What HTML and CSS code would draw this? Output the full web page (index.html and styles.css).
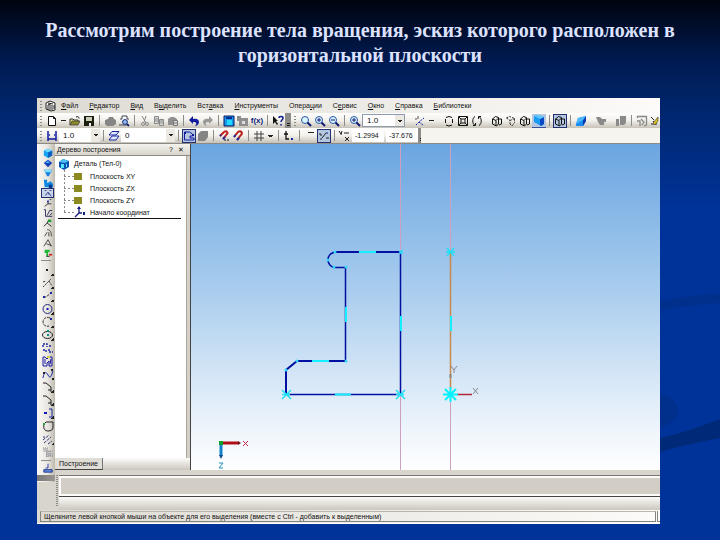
FILE: index.html
```html
<!DOCTYPE html>
<html lang="ru">
<head>
    <meta charset="utf-8">
    <title>Построение тела вращения</title>
    <link rel="stylesheet" href="styles.css">
</head>
<body>
    <!-- icon set, 12x12 grid -->
    <svg class="sprite" aria-hidden="true">
        <symbol id="i-app" viewBox="0 0 12 12"><path d="M1 3l4-2 5 2v7l-4 1-5-2z" fill="#fff" stroke="#222"/><path d="M3 10V5l2-1v6M7 10V5M9 9V5M3 3l5 1" fill="none" stroke="#222"/></symbol>
        <symbol id="i-new" viewBox="0 0 12 12"><path d="M2.5 1.5h5l2 2v7h-7z" fill="#fff" stroke="#111"/><path d="M7.5 1.5v2h2" fill="none" stroke="#111"/></symbol>
        <symbol id="i-open" viewBox="0 0 12 12"><path d="M1 10V4h3l1 1h4v2" fill="#e8e48a" stroke="#333"/><path d="M1 10l2-4h8l-2 4z" fill="#8c8a28" stroke="#333" stroke-width=".7"/><path d="M7 2c2-1 3 0 3 1.500" fill="none" stroke="#111"/></symbol>
        <symbol id="i-save" viewBox="0 0 12 12"><path d="M1 1h10v10H1z" fill="#1c2010"/><path d="M3 2h6v4H3z" fill="#c8ccb8"/><path d="M4 8h4v3H4z" fill="#eee"/><path d="M4 8h2v3H4z" fill="#222"/></symbol>
        <symbol id="i-print" viewBox="0 0 12 12"><path d="M1 5l3-1 1-2h4l1 2 2 1v4l-3 2H3L1 9z" fill="#858585"/></symbol>
        <symbol id="i-preview" viewBox="0 0 12 12"><path d="M2 4h2V1h5v3h2" fill="#fff" stroke="#445"/><path d="M1 9h10v2H1z" fill="#8d8d8d"/><circle cx="7" cy="7" r="2.400" fill="#9be" stroke="#0a2a80"/><path d="M9 9l2 2" stroke="#001060" stroke-width="1.500"/></symbol>
        <symbol id="i-cut" viewBox="0 0 12 12"><path d="M3 1l4 7M7 1L5 7" stroke="#888" fill="none"/><circle cx="4" cy="9" r="1.500" fill="none" stroke="#888"/><circle cx="8" cy="9" r="1.500" fill="none" stroke="#888"/></symbol>
        <symbol id="i-copy" viewBox="0 0 12 12"><path d="M1.500 1.500h4v7h-4zM6.500 4.500h4v6h-4zM2 4h3M2 6h3M7 6h3M7 8h3" fill="#ddd" stroke="#888"/></symbol>
        <symbol id="i-paste" viewBox="0 0 12 12"><path d="M1 10V4l3-2h3l3 2v6z" fill="#909090"/><path d="M6.500 5.500h4v5h-4zM7 8h3" fill="#ddd" stroke="#777"/></symbol>
        <symbol id="i-undo" viewBox="0 0 12 12"><path d="M1 5l4-4v3c4-1 6 1 6 3s-2 4-4 4c2-2 2-4-2-4v2z" fill="#101c9c"/></symbol>
        <symbol id="i-redo" viewBox="0 0 12 12"><path d="M11 5L7 1v3C3 3 1 5 1 7s2 4 4 4C3 9 3 7 7 7v2z" fill="#999"/></symbol>
        <symbol id="i-manager" viewBox="0 0 12 12"><path d="M1 1h10v10H1z" fill="#1598f0" stroke="#0a1860"/><path d="M3 2h6v2H3z" fill="#062c90"/><path d="M4 5h5v5H4z" fill="#22d8ff"/></symbol>
        <symbol id="i-vars" viewBox="0 0 12 12"><path d="M0 1h4v2h7v8H2V6H0z" fill="#8f8f8f"/><path d="M5 6h3v3H5z" fill="#ddd"/></symbol>
        <symbol id="i-help" viewBox="0 0 12 12"><path d="M1 1v8l2-2 2 3 1-1-2-3h2z" fill="#111"/><path d="M7 3c0-2 4-2 4 0s-2 2-2 4M9 9v1.500" fill="none" stroke="#0c1c8c" stroke-width="1.500"/></symbol>
        <symbol id="i-zoom" viewBox="0 0 12 12"><circle cx="5" cy="5" r="3.500" fill="#d8f4ff" stroke="#2c58a8"/><path d="M7.500 7.500L11 11" stroke="#101870" stroke-width="2"/></symbol>
        <symbol id="i-zoomin" viewBox="0 0 12 12"><circle cx="5" cy="5" r="3.500" fill="#d8f4ff" stroke="#2c58a8"/><path d="M3 5h4M5 3v4" stroke="#101870"/><path d="M7.500 7.500L11 11" stroke="#101870" stroke-width="2"/></symbol>
        <symbol id="i-zoomout" viewBox="0 0 12 12"><circle cx="5" cy="5" r="3.500" fill="#d8f4ff" stroke="#2c58a8"/><path d="M3 5h4" stroke="#101870"/><path d="M7.500 7.500L11 11" stroke="#101870" stroke-width="2"/></symbol>
        <symbol id="i-axes" viewBox="0 0 12 12"><path d="M2 10l3-3 5-4M5 7l4 3" fill="none" stroke="#1828a0" stroke-dasharray="2 1"/><path d="M4 1v3M1 4h2" stroke="#555"/></symbol>
        <symbol id="i-pan" viewBox="0 0 12 12"><path d="M3 2.500l3-1 3 1M9.500 4v4M2.500 4v4M3 10l3 1 3-1" fill="none" stroke="#111"/></symbol>
        <symbol id="i-frame" viewBox="0 0 12 12"><path d="M1.500 1.500h9v9h-9zM4 4h4v4H4zM2 2l2 2M10 2L8 4M2 10l2-2M10 10L8 8" fill="none" stroke="#111"/></symbol>
        <symbol id="i-rotate" viewBox="0 0 12 12"><path d="M4 1.500C1 3 1 9 4 10.500M8 1.500c3 1.500 3 7.500 0 9M2 10.500h2.500V8M10 1.500H7.500V4" fill="none" stroke="#111"/></symbol>
        <symbol id="i-wire" viewBox="0 0 12 12"><path d="M1.500 4l3-2.500 3 1V9l-2 2-4-2zM1.500 4L5 5.500 7.500 3M5 5.500V11M7 4h3.500v5L8 10" fill="none" stroke="#111"/></symbol>
        <symbol id="i-thin" viewBox="0 0 12 12"><path d="M1.500 3l3-1.500 5 2v4L7 11 5 9M1.500 3L5 5.500V9M5 5.500l4.500-2" fill="none" stroke="#333" stroke-dasharray="2 1"/></symbol>
        <symbol id="i-solid" viewBox="0 0 12 12"><path d="M1 2l4-1 6 2v7l-3 2-7-4z" fill="#189cf8"/><path d="M7 5l4-2v7l-3 2-1-1z" fill="#0848c0"/><path d="M1 2l4-1 6 2-4 2z" fill="#60c8ff"/></symbol>
        <symbol id="i-persp" viewBox="0 0 12 12"><path d="M1 9l2-6 8-2v5l-3 5H1z" fill="#188cf0"/><path d="M8 5l3-4v5l-3 5z" fill="#0838b0"/><path d="M1 9l2-6 8-2-3 4z" fill="#50b8ff"/></symbol>
        <symbol id="i-grayA" viewBox="0 0 12 12"><path d="M1 2h4l2 2h4v3H9v3H5L3 7z" fill="#8a8a8a"/></symbol>
        <symbol id="i-grayB" viewBox="0 0 12 12"><path d="M1 4h3v7H1zM5 1h6v7L9 10H5z" fill="#8a8a8a"/></symbol>
        <symbol id="i-grayC" viewBox="0 0 12 12"><path d="M1.500 3V1.500h9V10L8 11M1 6h3v5M5 4l3 3-2 3" fill="none" stroke="#888" stroke-width="1.300"/></symbol>
        <symbol id="i-edit" viewBox="0 0 12 12"><path d="M1 2l3 3M1 9h6M3 6l3 3" stroke="#222"/><path d="M3 8l5-6v4l-3 4z" fill="#d8c020" stroke="#333" stroke-width=".6"/></symbol>
        <symbol id="i-step" viewBox="0 0 12 12"><path d="M2 1v10M10 1v10M2 9h8M3 5h1M8 5h1" stroke="#1018a0" stroke-width="1.500"/></symbol>
        <symbol id="i-layers" viewBox="0 0 12 12"><path d="M4 1.500h7L8 5H1zM4 6h7L8 10H1z" fill="#dfe8ff" stroke="#1828a0"/></symbol>
        <symbol id="i-sketch" viewBox="0 0 12 12"><path d="M1.500 10V2h5l3 2v2H7v2h4v2z" fill="none" stroke="#1018a0"/><path d="M1 2h2v2H1zM9 4h2v2H9z" fill="#1018a0"/></symbol>
        <symbol id="i-body" viewBox="0 0 12 12"><path d="M1 4l3-3h7v6l-3 4H1z" fill="#858585"/></symbol>
        <symbol id="i-magnet" viewBox="0 0 12 12"><path d="M2 7l4-5c3-2 5 1 3 3l-4 5" fill="none" stroke="#b82020" stroke-width="2"/><path d="M2 7l1.500-2M5 10l2-2" stroke="#1828a0" stroke-width="2"/></symbol>
        <symbol id="i-magnet2" viewBox="0 0 12 12"><path d="M2 6l4-4c3-2 4 1 3 2L5 9" fill="none" stroke="#c02020" stroke-width="2"/><path d="M6 10h6" stroke="#111" stroke-dasharray="2 1"/><path d="M2 6l1-1M5 9l2-2" stroke="#1828a0" stroke-width="2"/></symbol>
        <symbol id="i-grid" viewBox="0 0 12 12"><path d="M4 1v10M8 1v10M1 4h10M1 8h10" stroke="#444"/></symbol>
        <symbol id="i-local" viewBox="0 0 12 12"><path d="M3 1v8h3M1 4h4" fill="none" stroke="#111" stroke-width="1.300"/><path d="M8 8h2v2H8z" fill="#1828a0"/></symbol>
        <symbol id="i-ortho" viewBox="0 0 12 12"><path d="M4 2.500h6" stroke="#222"/></symbol>
        <symbol id="i-round" viewBox="0 0 12 12"><path d="M1 4h2v2M4 8l4-5M8 8h3M2 9h2" fill="none" stroke="#222"/><path d="M8 3h2" stroke="#1828a0"/></symbol>
        <symbol id="i-coord" viewBox="0 0 12 12"><path d="M1 1l2 3M4 1L3 5M6 3h5M7 7l4 4M11 7l-4 4" fill="none" stroke="#222"/></symbol>

        <symbol id="p-root" viewBox="0 0 12 12"><path d="M1 4l4-3 6 2v6l-5 3-5-3z" fill="#0c50b4"/><path d="M1 4l4-3 6 2-4 2z" fill="#4cc0f4"/><path d="M3 6h3v4H3zM8 6h1v3H8z" fill="#50e8ff"/></symbol>
        <symbol id="p-cube" viewBox="0 0 12 12"><path d="M1 3l5-2 5 2v6l-5 3-5-3z" fill="#18a4f4"/><path d="M6 5l5-2v6l-5 3z" fill="#0c60c0"/><path d="M1 3l5-2 5 2-5 2z" fill="#74dcff"/></symbol>
        <symbol id="p-node" viewBox="0 0 12 12"><path d="M1 6l5-4 5 4-5 5z" fill="#1440b8"/><path d="M3 6l3-3 2 3z" fill="#38b0ff"/></symbol>
        <symbol id="p-cone" viewBox="0 0 12 12"><path d="M1 2h10L7 10H5z" fill="#1880e0"/><path d="M1 2h10L9 5H3z" fill="#80e0ff"/></symbol>
        <symbol id="p-part" viewBox="0 0 12 12"><path d="M1 2h4v4l4-2 3 3v4H2z" fill="#1088e0"/><path d="M7 8h4v4H7z" fill="#0a3890"/></symbol>
        <symbol id="p-sketch" viewBox="0 0 12 12"><path d="M2 3h2M3 9l3-4 4 5M8 3h2M6 7h2" fill="none" stroke="#222c80"/></symbol>
        <symbol id="p-point" viewBox="0 0 12 12"><path d="M2 10l4-3V4M6 7h4M8 2h2" fill="none" stroke="#222"/><path d="M5 3h2v2H5z" fill="#1828a0"/></symbol>
        <symbol id="p-dim" viewBox="0 0 12 12"><path d="M1 2h2v8h8M5 9l3-6h3M8 9l3-3" fill="none" stroke="#1a1a50"/></symbol>
        <symbol id="p-check" viewBox="0 0 12 12"><path d="M1 10l4-4 2-4M5 6l5 4" fill="none" stroke="#111"/><path d="M6 2h4v3H6z" fill="#20a030"/></symbol>
        <symbol id="p-curve" viewBox="0 0 12 12"><path d="M2 10l3-5M5 2c4 0 5 3 5 8M7 5v5" fill="none" stroke="#333"/></symbol>
        <symbol id="p-measure" viewBox="0 0 12 12"><path d="M1 10l5-8 4 8M4 7l6 2" fill="none" stroke="#333"/></symbol>
        <symbol id="p-filter" viewBox="0 0 12 12"><path d="M2 2h6v3H6v5H4V6H2z" fill="#20b838"/><path d="M7 8h4" stroke="#d02020" stroke-width="2"/><path d="M4 10h4" stroke="#111"/></symbol>
        <symbol id="g-point" viewBox="0 0 12 12"><path d="M4 5h2v2H4z" fill="#222"/></symbol>
        <symbol id="g-aux" viewBox="0 0 12 12"><path d="M1 10l8-8M1 5l3-1M7 4l3 5" fill="none" stroke="#333" stroke-dasharray="2 1"/></symbol>
        <symbol id="g-line" viewBox="0 0 12 12"><path d="M1 7h3l5-4" fill="none" stroke="#333" stroke-dasharray="3 1"/><path d="M1 6h2v2H1zM8 2h2v2H8z" fill="#1828a0"/></symbol>
        <symbol id="g-circle" viewBox="0 0 12 12"><circle cx="5.500" cy="6" r="4.500" fill="none" stroke="#222c80"/><path d="M4.500 5h2v2h-2z" fill="#1018c0"/></symbol>
        <symbol id="g-arc" viewBox="0 0 12 12"><path d="M8 2C4 0 1 3 1 6s3 5 6 4" fill="none" stroke="#333" stroke-dasharray="3 1"/><path d="M8 2h2v2H8z" fill="#1828a0"/></symbol>
        <symbol id="g-ellipse" viewBox="0 0 12 12"><ellipse cx="5.500" cy="6" rx="5" ry="3.500" fill="none" stroke="#222"/><path d="M5 5h2v2H5zM5 1h2v2H5z" fill="#108888"/></symbol>
        <symbol id="g-multi" viewBox="0 0 12 12"><path d="M1 5V2h4v3M7 4h3M1 8h3v3M7 7v3h4" fill="none" stroke="#1828a0" stroke-width="1.400" stroke-dasharray="2 1"/></symbol>
        <symbol id="g-rect" viewBox="0 0 12 12"><path d="M1 2h2l2 2 2-2h3v9H7V6L5 8v3H1zM3 4v5M9 4l-1 5" fill="none" stroke="#1818a0"/><path d="M5 1h3v2H5z" fill="#d0d040"/></symbol>
        <symbol id="g-spline" viewBox="0 0 12 12"><path d="M1 10c1-6 3-7 5-3s3 2 5-4" fill="none" stroke="#1828a0"/><path d="M9 1h2v2H9zM1 4h2v2H1z" fill="#222"/></symbol>
        <symbol id="g-chamfer" viewBox="0 0 12 12"><path d="M1 2h3l5 4v5M6 9h3" fill="none" stroke="#222"/></symbol>
        <symbol id="g-project" viewBox="0 0 12 12"><path d="M7 2h3v8H7" fill="none" stroke="#1828a0"/><path d="M2 5h3v2H2z" fill="#1018c0"/></symbol>
        <symbol id="g-contour" viewBox="0 0 12 12"><path d="M2 4l2-2h7v5c0 3-2 4-5 4s-5-2-4-7z" fill="none" stroke="#222"/><path d="M1 3h2v2H1z" fill="#20a030"/></symbol>
        <symbol id="g-equid" viewBox="0 0 12 12"><path d="M1 7l6-5M2 10l7-6M6 11l4-3M1 4h2" fill="none" stroke="#333c80" stroke-dasharray="3 1"/></symbol>
        <symbol id="g-hatch" viewBox="0 0 12 12"><path d="M1 2h5v3h5v6H4V6H1z" fill="#c6c6c6"/><path d="M1 2h5M4 5h7M4 8h7M4 10h7M5 4v7M8 5v6" stroke="#8c8c8c" stroke-dasharray="1 1"/></symbol>
        <symbol id="g-table" viewBox="0 0 12 12"><path d="M1 8h10v3H1z" fill="#6090e0" stroke="#102080"/><path d="M6 1v5H3" fill="none" stroke="#1828a0"/></symbol>
    </svg>

    <svg class="swoosh" viewBox="0 0 60 160" aria-hidden="true">
        <path d="M0 10C20 4 40 3 60 2v9C40 12 20 15 0 18z" fill="#002f8c"/>
        <path d="M0 102c12 2 18 10 18 17s-8 13-18 17z" fill="#002f8c"/>
        <path d="M0 146c20-4 42-12 60-19v19c-20 4-40 8-60 14z" fill="#002a78"/>
    </svg>

    <h1 class="slide-title">Рассмотрим построение тела вращения, эскиз которого расположен в горизонтальной плоскости</h1>

    <main class="app">
        <nav class="menu">
            <span class="grip"></span>
            <svg class="icon menu-logo"><use href="#i-app"/></svg>
            <button><u>Ф</u>айл</button>
            <button><u>Р</u>едактор</button>
            <button><u>В</u>ид</button>
            <button>В<u>ы</u>делить</button>
            <button>Вст<u>а</u>вка</button>
            <button><u>И</u>нструменты</button>
            <button>Опера<u>ц</u>ии</button>
            <button>С<u>е</u>рвис</button>
            <button><u>О</u>кно</button>
            <button><u>С</u>правка</button>
            <button><u>Б</u>иблиотеки</button>
        </nav>

        <div class="toolbar">
            <span class="grip"></span>
            <button class="tool" aria-label="Создать"><svg class="icon"><use href="#i-new"/></svg></button>
            <button class="drop" aria-label="Вид документа"></button>
            <button class="tool" aria-label="Открыть"><svg class="icon"><use href="#i-open"/></svg></button>
            <button class="tool" aria-label="Сохранить"><svg class="icon"><use href="#i-save"/></svg></button>
            <span class="sep"></span>
            <button class="tool" aria-label="Печать"><svg class="icon"><use href="#i-print"/></svg></button>
            <button class="tool" aria-label="Просмотр"><svg class="icon"><use href="#i-preview"/></svg></button>
            <span class="sep"></span>
            <button class="tool" aria-label="Вырезать"><svg class="icon"><use href="#i-cut"/></svg></button>
            <button class="tool" aria-label="Копировать"><svg class="icon"><use href="#i-copy"/></svg></button>
            <button class="tool" aria-label="Вставить"><svg class="icon"><use href="#i-paste"/></svg></button>
            <span class="sep"></span>
            <button class="tool" aria-label="Отменить"><svg class="icon"><use href="#i-undo"/></svg></button>
            <button class="tool" aria-label="Повторить"><svg class="icon"><use href="#i-redo"/></svg></button>
            <span class="sep"></span>
            <button class="tool" aria-label="Менеджер"><svg class="icon"><use href="#i-manager"/></svg></button>
            <button class="tool" aria-label="Библиотеки"><svg class="icon"><use href="#i-vars"/></svg></button>
            <button class="tool fx">f(x)</button>
            <span class="sep"></span>
            <button class="tool" aria-label="Справка"><svg class="icon"><use href="#i-help"/></svg></button>
            <button class="more" aria-label="Ещё"></button>
            <span class="grip"></span>
            <button class="tool" aria-label="Рамка"><svg class="icon"><use href="#i-zoom"/></svg></button>
            <button class="tool" aria-label="Увеличить"><svg class="icon"><use href="#i-zoomin"/></svg></button>
            <button class="tool" aria-label="Уменьшить"><svg class="icon"><use href="#i-zoomout"/></svg></button>
            <span class="sep"></span>
            <button class="tool" aria-label="Масштаб"><svg class="icon"><use href="#i-zoomin"/></svg></button>
            <span class="combo boxed"><select aria-label="Текущий масштаб"><option>1.0</option></select></span>
            <span class="gap wide"></span>
            <button class="tool" aria-label="Ориентация"><svg class="icon"><use href="#i-axes"/></svg></button>
            <button class="drop" aria-label="Список видов"></button>
            <span class="gap"></span>
            <button class="tool" aria-label="Сдвинуть"><svg class="icon"><use href="#i-pan"/></svg></button>
            <button class="tool" aria-label="Показать все"><svg class="icon"><use href="#i-frame"/></svg></button>
            <button class="tool" aria-label="Повернуть"><svg class="icon"><use href="#i-rotate"/></svg></button>
            <span class="gap"></span>
            <button class="tool" aria-label="Каркас"><svg class="icon"><use href="#i-wire"/></svg></button>
            <button class="tool" aria-label="Без невидимых"><svg class="icon"><use href="#i-thin"/></svg></button>
            <button class="tool" aria-label="Невидимые тонкие"><svg class="icon"><use href="#i-wire"/></svg></button>
            <button class="tool on" aria-label="Полутоновое"><svg class="icon"><use href="#i-solid"/></svg></button>
            <span class="sep"></span>
            <button class="tool on framed" aria-label="С каркасом"><svg class="icon"><use href="#i-wire"/></svg></button>
            <span class="sep"></span>
            <button class="tool" aria-label="Перспектива"><svg class="icon"><use href="#i-persp"/></svg></button>
            <span class="gap"></span>
            <button class="tool" aria-label="Перестроить"><svg class="icon"><use href="#i-grayA"/></svg></button>
            <span class="gap"></span>
            <button class="tool" aria-label="Деталь"><svg class="icon"><use href="#i-grayB"/></svg></button>
            <span class="sep"></span>
            <button class="tool" aria-label="Сечение"><svg class="icon"><use href="#i-grayC"/></svg></button>
            <button class="tool" aria-label="Эскиз"><svg class="icon"><use href="#i-edit"/></svg></button>
        </div>

        <div class="toolbar-row">
            <div class="toolbar short">
                <span class="grip"></span>
                <button class="tool" aria-label="Шаг"><svg class="icon"><use href="#i-step"/></svg></button>
                <span class="combo"><select aria-label="Шаг курсора"><option>1.0</option></select></span>
                <span class="sep"></span>
                <button class="tool" aria-label="Слои"><svg class="icon"><use href="#i-layers"/></svg></button>
                <span class="combo layer"><select aria-label="Слой"><option>0</option></select></span>
                <span class="sep"></span>
                <button class="tool on framed" aria-label="Эскиз"><svg class="icon"><use href="#i-sketch"/></svg></button>
                <button class="tool" aria-label="Тело"><svg class="icon"><use href="#i-body"/></svg></button>
                <span class="sep"></span>
                <button class="tool" aria-label="Привязки"><svg class="icon"><use href="#i-magnet2"/></svg></button>
                <button class="tool" aria-label="Запретить привязки"><svg class="icon"><use href="#i-magnet"/></svg></button>
                <span class="sep"></span>
                <button class="tool" aria-label="Сетка"><svg class="icon"><use href="#i-grid"/></svg></button>
                <button class="drop caret" aria-label="Вид сетки"></button>
                <span class="sep"></span>
                <button class="tool" aria-label="Система координат"><svg class="icon"><use href="#i-local"/></svg></button>
                <span class="sep"></span>
                <button class="tool" aria-label="Ортогонально"><svg class="icon"><use href="#i-ortho"/></svg></button>
                <button class="tool on framed" aria-label="Округление"><svg class="icon"><use href="#i-round"/></svg></button>
                <span class="sep"></span>
                <svg class="icon"><use href="#i-coord"/></svg>
                <input class="coord" aria-label="X" value="-1.2994">
                <input class="coord" aria-label="Y" value="-37.676">
                <button class="more" aria-label="Ещё"></button>
            </div>
        </div>

        <div class="work">
            <div class="palette">
                <div class="palette-group">
                    <button aria-label="Деталь"><svg class="icon"><use href="#p-cube"/></svg></button>
                    <button aria-label="Кривые"><svg class="icon"><use href="#p-node"/></svg></button>
                    <button aria-label="Поверхности"><svg class="icon"><use href="#p-cone"/></svg></button>
                    <button aria-label="Листовое тело"><svg class="icon"><use href="#p-part"/></svg></button>
                    <button class="on" aria-label="Геометрия"><svg class="icon"><use href="#p-sketch"/></svg></button>
                    <button aria-label="Обозначения"><svg class="icon"><use href="#p-point"/></svg></button>
                    <button aria-label="Размеры"><svg class="icon"><use href="#p-dim"/></svg></button>
                    <button aria-label="Редактирование"><svg class="icon"><use href="#p-check"/></svg></button>
                    <button aria-label="Параметризация"><svg class="icon"><use href="#p-curve"/></svg></button>
                    <button aria-label="Измерения"><svg class="icon"><use href="#p-measure"/></svg></button>
                    <button aria-label="Выделение"><svg class="icon"><use href="#p-filter"/></svg></button>
                </div>
                <hr>
                <div class="palette-group tall">
                    <button class="flyout" aria-label="Точка"><svg class="icon"><use href="#g-point"/></svg></button>
                    <button class="flyout" aria-label="Вспомогательная прямая"><svg class="icon"><use href="#g-aux"/></svg></button>
                    <button class="flyout" aria-label="Отрезок"><svg class="icon"><use href="#g-line"/></svg></button>
                    <button class="flyout" aria-label="Окружность"><svg class="icon"><use href="#g-circle"/></svg></button>
                    <button class="flyout" aria-label="Дуга"><svg class="icon"><use href="#g-arc"/></svg></button>
                    <button class="flyout" aria-label="Эллипс"><svg class="icon"><use href="#g-ellipse"/></svg></button>
                    <button aria-label="Непрерывный ввод"><svg class="icon"><use href="#g-multi"/></svg></button>
                    <button aria-label="Прямоугольник"><svg class="icon"><use href="#g-rect"/></svg></button>
                    <button class="flyout" aria-label="Сплайн"><svg class="icon"><use href="#g-spline"/></svg></button>
                    <button class="flyout" aria-label="Фаска"><svg class="icon"><use href="#g-chamfer"/></svg></button>
                    <button class="flyout" aria-label="Скругление"><svg class="icon"><use href="#g-chamfer"/></svg></button>
                    <button class="flyout" aria-label="Проекция"><svg class="icon"><use href="#g-project"/></svg></button>
                    <button aria-label="Контур"><svg class="icon"><use href="#g-contour"/></svg></button>
                    <button class="flyout" aria-label="Эквидистанта"><svg class="icon"><use href="#g-equid"/></svg></button>
                    <button aria-label="Штриховка"><svg class="icon"><use href="#g-hatch"/></svg></button>
                </div>
                <hr>
                <div class="palette-group">
                    <button aria-label="Таблица"><svg class="icon"><use href="#g-table"/></svg></button>
                </div>
                <div class="palette-end"></div>
            </div>

            <div class="stage">
                <div class="docs">
                    <aside class="tree">
                        <div class="tree-head">
                            <span>Дерево построения</span>
                            <span class="tree-close"><button>?</button><button>✕</button></span>
                        </div>
                        <div class="tree-body">
                            <div class="tree-root"><svg class="icon"><use href="#p-root"/></svg>Деталь (Тел-0)</div>
                            <ul class="tree-list">
                                <li><i class="plane"></i>Плоскость XY</li>
                                <li><i class="plane"></i>Плоскость ZX</li>
                                <li><i class="plane"></i>Плоскость ZY</li>
                                <li><svg class="icon origin" viewBox="0 0 12 12"><path d="M5 1v6L1 11M5 7h3" fill="none" stroke="#10187c" stroke-width="1.300"/><path d="M3 3l2-3 2 3zM9 6h2v3H9z" fill="#10187c"/></svg>Начало координат</li>
                            </ul>
                        </div>
                        <div class="tree-tabs"><button>Построение</button></div>
                    </aside>

                    <div class="view">
                        <svg class="drawing" viewBox="0 0 469 326">
                            <!-- construction lines -->
                            <path d="M209.500 0v326M259.500 0v326" stroke="#cda0bf"/>
                            <!-- profile -->
                            <g fill="none" stroke="#0010a0">
                                <path d="M144 108h65" stroke-width="2"/>
                                <path d="M144 108c-4 1-7 4-7 8s3 7 6 7.500h11.500" stroke-width="1.500"/>
                                <path d="M154.500 123v94M209.500 108v142.500H95.500" stroke-width="1.500"/>
                                <path d="M154.500 217H106l-11 9v24" stroke-width="2"/>
                            </g>
                            <path d="M259.500 108v137" stroke="#c8894c" stroke-width="1.500"/>
                            <!-- midpoints -->
                            <path d="M168 108h17M121 217h17M144 250.500h16M155 163v15M210 172v15M260 172v15" stroke="#14f0ff" stroke-width="2"/>
                            <g fill="#30d8f8">
                                <circle cx="144" cy="108" r="1.500"/><circle cx="137" cy="116" r="1.500"/><circle cx="143" cy="123" r="1.500"/>
                                <circle cx="155" cy="123" r="1.500"/><circle cx="210" cy="108" r="2"/><circle cx="155" cy="217" r="1.500"/>
                                <circle cx="106" cy="217" r="1.500"/><circle cx="95" cy="226" r="1.500"/>
                            </g>
                            <g stroke="#20e0f4" stroke-width="1.500">
                                <path d="M91 246l9 9M100 246l-9 9M91 250.500h8"/>
                                <path d="M205 246l9 9M214 246l-9 9M205 250.500h8"/>
                                <path d="M256 104l7 8M263 104l-7 8M255 108h9"/>
                            </g>
                            <!-- origin -->
                            <path d="M266 250.500h15" stroke="#b02838" stroke-width="1.500"/>
                            <path d="M259.500 243v15M252 250.500h15M254 245l11 11M265 245l-11 11" stroke="#00f4ff" stroke-width="2"/>
                            <path d="M259.500 230v4" stroke="#888" stroke-width="2"/>
                            <path d="M260 222l3 4 3-4M263 226v3M282 244l5 6M287 244l-5 6" stroke="#888" fill="none"/>
                            <!-- view triad -->
                            <path d="M30 299h17" stroke="#b01018" stroke-width="3"/>
                            <path d="M47 297l3 2-3 2z" fill="#701018"/>
                            <path d="M30 299v13" stroke="#1080c8" stroke-width="3"/>
                            <path d="M28 311h4l-2 4z" fill="#104888"/>
                            <path d="M28 297h4v4h-4z" fill="#10a030"/>
                            <path d="M52 297l5 5M57 297l-5 5" stroke="#c02848"/>
                            <path d="M28 319h4l-4 5h4" stroke="#2890b8" fill="none"/>
                        </svg>
                    </div>
                </div>

                <div class="props">
                    <span class="grip tall-grip"></span>
                    <div class="props-panel">
                        <div class="props-fields"></div>
                        <div class="props-tabs"></div>
                    </div>
                </div>
            </div>
        </div>

        <footer class="status">
            <span class="status-text">Щелкните левой кнопкой мыши на объекте для его выделения (вместе с Ctrl - добавить к выделенным)</span>
            <span class="status-end"></span>
        </footer>
    </main>
</body>
</html>
```
FILE: styles.css
```css
* {
    box-sizing: border-box;
}
body {
    margin: 0;
    min-height: 100vh;
    position: relative;
    background: linear-gradient(#000410 0, #001a50 60px, #00266e 110px, #003399 210px) no-repeat #003399;
    font-family: "Liberation Sans", Arial, sans-serif;
    font-size: 7px;
    color: #111;
}
button, select, input {
    font: inherit;
    color: inherit;
    margin: 0;
    padding: 0;
    border: 0;
    background: none;
}
.sprite {
    display: none;
}
.icon {
    display: block;
    width: 12px;
    height: 12px;
    flex: none;
}
.swoosh {
    position: absolute;
    right: 0;
    top: 292px;
    width: 60px;
    height: 160px;
}
.slide-title {
    margin: 0;
    padding: 18px 40px 30px;
    font-family: "Liberation Serif", "Times New Roman", serif;
    font-size: 20px;
    font-weight: bold;
    line-height: 25px;
    text-align: center;
    color: #dde2ff;
}
.app {
    position: relative;
    margin: 0 60px 0 37px;
    background: #d8d5cd;
    overflow: hidden;
}

/* menu and toolbars */
.menu {
    display: flex;
    align-items: center;
    height: 15px;
    background: linear-gradient(90deg, #dddad2, #fcfbf9);
}
.menu-logo {
    margin-right: 4px;
}
.menu button {
    margin-right: 11px;
    line-height: 12px;
}
.grip {
    flex: none;
    width: 8px;
    height: 11px;
    background: repeating-linear-gradient(#8c8a84 0 1px, transparent 1px 3px) 3px 1px / 2px 10px no-repeat;
}
.toolbar {
    display: flex;
    align-items: center;
    height: 15px;
    overflow: hidden;
    background: linear-gradient(#fefefd, #f2f0eb 50%, #c6c2b8);
}
.toolbar-row {
    background: #f6f4ef;
    border-bottom: 1px solid #8c8a86;
}
.toolbar.short {
    width: 384px;
}
.tool {
    flex: none;
    display: flex;
    align-items: center;
    justify-content: center;
    width: 14px;
    height: 14px;
}
.tool.on {
    background: #b4c6e0;
    border-bottom: 1px solid #33509c;
}
.tool.framed {
    border: 1px solid #223070;
}
.fx {
    font-size: 8px;
    font-weight: bold;
    color: #101c78;
}
.sep {
    flex: none;
    width: 7px;
    height: 11px;
    background: linear-gradient(#8e8c88, #8e8c88) 3px 0 / 1px 11px no-repeat;
}
.gap {
    flex: none;
    width: 6px;
}
.gap.wide {
    width: 8px;
}
.drop {
    flex: none;
    width: 9px;
    height: 12px;
    background: linear-gradient(#222, #222) 2px 5px / 5px 1px no-repeat;
}
.drop.caret {
    background: linear-gradient(#222, #222) 2px 5px / 5px 1px no-repeat, linear-gradient(#222, #222) 3px 6px / 3px 1px no-repeat;
}
.more {
    flex: none;
    width: 6px;
    height: 15px;
    margin-left: auto;
    background: linear-gradient(#222, #222) 2px 10px / 3px 1px no-repeat, linear-gradient(#222, #222) 2px 12px / 3px 1px no-repeat, #8f8d88;
}
.combo {
    flex: none;
    position: relative;
    width: 41px;
    height: 13px;
    background: #fff;
    font-size: 8px;
}
.combo.boxed {
    width: 43px;
    border: 1px solid #8e9ab0;
}
.combo.layer {
    width: 54px;
}
.combo select {
    display: block;
    appearance: none;
    width: 100%;
    height: 100%;
    padding-left: 4px;
}
.combo::after {
    content: "";
    position: absolute;
    right: 0;
    top: 0;
    bottom: 0;
    width: 9px;
    background: linear-gradient(#222, #222) 3px 5px / 4px 1px no-repeat, linear-gradient(#222, #222) 4px 6px / 2px 1px no-repeat, #ece9e3;
    pointer-events: none;
}
.coord {
    flex: none;
    width: 32px;
    height: 12px;
    margin-left: 2px;
    padding-left: 3px;
    background: #fff;
}

/* left palette */
.work {
    display: flex;
}
.palette {
    flex: none;
    width: 18px;
    padding-top: 4px;
    background: linear-gradient(90deg, #fbfaf8, #e9e6e0 60%, #bdb9ae) 0 0 / 18px 338px no-repeat;
}
.palette-group {
    display: flex;
    flex-direction: column;
    padding-left: 4px;
}
.palette-group button {
    display: flex;
    align-items: center;
    justify-content: center;
    width: 13px;
    height: 10px;
}
.palette-group .icon {
    height: 10px;
}
.palette-group.tall button {
    height: 13px;
}
.palette-group.tall .icon {
    height: 12px;
}
.palette-group .on {
    border: 1px solid #223070;
    background: #c8d4e8;
}
.palette-group .flyout {
    background: linear-gradient(135deg, transparent 50%, #222 50%) 100% 100% / 3px 3px no-repeat;
}
.palette hr {
    margin: 2px 4px;
    border: 0;
    border-top: 1px solid #8e8c88;
}
.palette-end {
    height: 6px;
    margin-top: 2px;
    background: linear-gradient(90deg, #777, #9a9892);
}
.stage {
    flex: 1;
    min-width: 0;
}

/* model tree */
.docs {
    display: flex;
    align-items: stretch;
}
.tree {
    flex: none;
    display: flex;
    flex-direction: column;
    width: 136px;
    background: #d4d0c8;
    border-right: 1px solid #444;
}
.tree-head {
    display: flex;
    justify-content: space-between;
    height: 12px;
    padding: 0 6px 0 2px;
    line-height: 11px;
    background: linear-gradient(#f4f2ee, #d8d5cd);
    border-bottom: 1px solid #8c8a86;
}
.tree-close {
    display: flex;
    gap: 5px;
}
.tree-body {
    flex: 1;
    margin-right: 3px;
    padding: 1px 5px 0 3px;
    background: #fff;
    border-right: 1px solid #aaa69c;
}
.tree-root {
    display: flex;
    align-items: center;
    gap: 4px;
    height: 13px;
}
.tree-list {
    list-style: none;
    margin: 0;
    padding: 0 0 0 6px;
    border-bottom: 1px solid #111;
}
.tree-list li {
    display: flex;
    align-items: center;
    height: 12px;
    background: repeating-linear-gradient(#888 0 2px, #fff 2px 4px) 0 0 / 1px 12px no-repeat;
}
.tree-list li:last-child {
    background-size: 1px 6px;
}
.tree-list li::before {
    content: "";
    width: 10px;
    height: 1px;
    background: repeating-linear-gradient(90deg, #888 0 2px, #fff 2px 4px);
}
.plane {
    width: 8px;
    height: 7px;
    margin-right: 8px;
    background: #8a8a20;
}
.origin {
    margin-right: 4px;
}
.tree-tabs {
    height: 12px;
    background: linear-gradient(#fdfcfa, #cbc7be);
}
.tree-tabs button {
    width: 48px;
    height: 12px;
    background: #e0ddd6;
    border-bottom: 1px solid #444;
    border-right: 1px solid #777;
}

/* drawing area */
.view {
    flex: 1;
    min-width: 0;
    background: linear-gradient(#6ba5e1, #a9cdee 45%, #e3eef9 80%, #fff);
}
.drawing {
    display: block;
    width: 100%;
}

/* property panel */
.props {
    display: flex;
    padding-top: 5px;
}
.tall-grip {
    width: 4px;
    height: 32px;
    background: repeating-linear-gradient(#8c8a84 0 1px, transparent 1px 2px) 1px 0 / 2px 32px no-repeat;
}
.props-panel {
    flex: 1;
    border-top: 1px solid #77756f;
}
.props-fields {
    height: 20px;
    border: 2px solid #fcfbf9;
    border-right: 0;
    background: #d2cec5;
}
.props-tabs {
    height: 14px;
    border-top: 1px solid #444;
    background: linear-gradient(#fbfaf8, #cbc7be);
}

/* status bar */
.status {
    display: flex;
    height: 14px;
    padding: 1px 0 1px 3px;
    background: linear-gradient(90deg, #dddad2, #fcfbf9);
    border-bottom: 1px solid #fff;
}
.status-text {
    flex: 1;
    padding-left: 3px;
    border: 1px solid #85837e;
    border-top-color: #b8b5ae;
    line-height: 9px;
    white-space: nowrap;
}
.status-end {
    width: 3px;
    margin-left: 1px;
    border-left: 1px solid #85837e;
    border-bottom: 1px solid #85837e;
}
```
